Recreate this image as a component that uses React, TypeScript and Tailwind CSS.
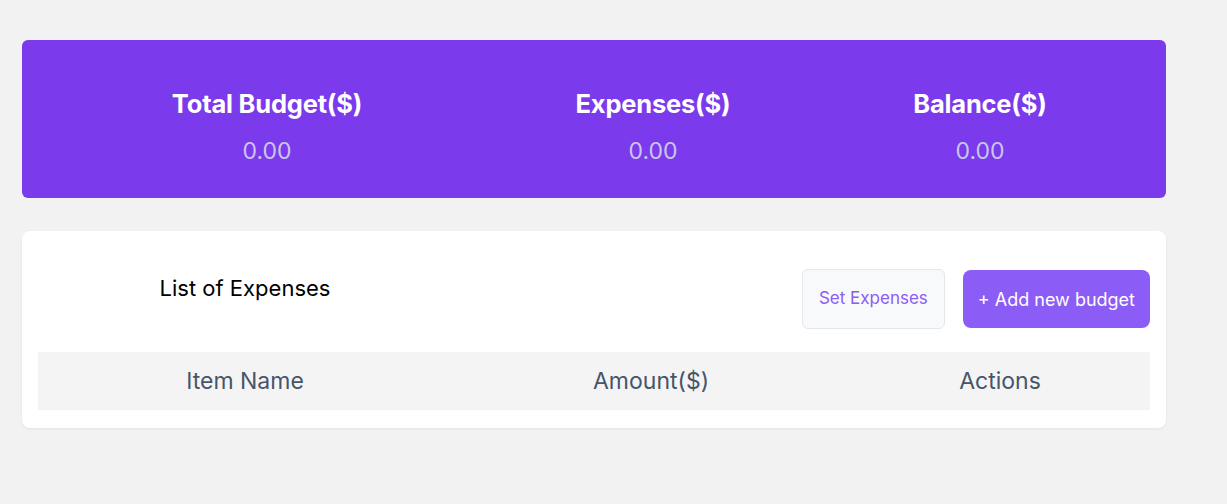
import React from "react";

const stats = [
  { label: "Total Budget($)", value: "0.00", width: "w-[490px]" },
  { label: "Expenses($)", value: "0.00", width: "w-[282px]" },
  { label: "Balance($)", value: "0.00", width: "w-[372px]" },
];

const App = () => {
  return (
    <div
      className="min-h-screen w-full bg-[#f2f2f2] pl-[22px] pt-[40px]"
      style={{ fontFamily: "Inter, 'Noto Sans', sans-serif" }}
    >
      <div className="w-[1144px]">
        {/* summary */}
        <div className="flex h-[158px] items-center rounded-md bg-[#7c3aed] pt-[15px]">
          {stats.map((s) => (
            <div key={s.label} className={`${s.width} flex flex-col items-center gap-[15px]`}>
              <div className="text-[25.5px] font-bold leading-[34px] tracking-[-0.2px] text-white">{s.label}</div>
              <div className="text-[23px] leading-[30px] text-[#c9c6e8]">{s.value}</div>
            </div>
          ))}
        </div>

        {/* expenses list */}
        <div className="mt-[33px] rounded-lg bg-white px-4 pb-[18px] pt-[38px] shadow-[0_1px_3px_rgba(0,0,0,0.06)]">
          <div className="flex items-start justify-between">
            <div className="flex w-[414px] justify-center pt-[3px] text-[22px] leading-8 text-black">
              List of Expenses
            </div>
            <div className="flex gap-[18px]">
              <button className="h-[60px] rounded-md border border-[#e5e7eb] bg-[#f8f9fa] px-[16px] text-[17px] text-[#8b5cf6]">
                Set Expenses
              </button>
              <button className="mt-[1px] h-[58px] rounded-lg bg-[#8b5cf6] px-[15px] text-[18px] text-white">
                + Add new budget
              </button>
            </div>
          </div>
          <div className="mt-[23px] flex h-[58px] items-center bg-[#f4f4f5] text-[23px] text-[#475569]">
            <div className="w-[414px] text-center">Item Name</div>
            <div className="w-[398px] text-center">Amount($)</div>
            <div className="w-[300px] text-center">Actions</div>
          </div>
        </div>
      </div>
    </div>
  );
};

export default App;
